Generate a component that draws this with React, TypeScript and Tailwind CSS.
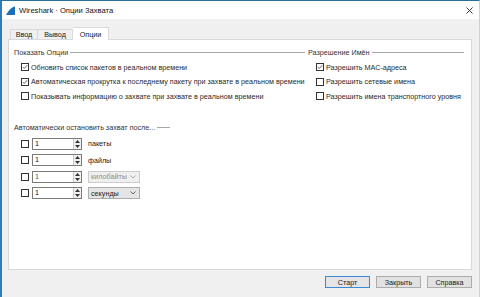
import React from "react";

function Check({ checked = false }: { checked?: boolean }) {
  return (
    <div className="w-[8px] h-[8px] border border-[#333333] bg-white flex items-center justify-center shrink-0">
      {checked && (
        <svg width="8" height="8" viewBox="0 0 8 8" className="block">
          <path d="M1 4 L3 6 L7 1.5" fill="none" stroke="#222" strokeWidth="0.9" />
        </svg>
      )}
    </div>
  );
}

function GroupHeader({ label, className = "" }: { label: string; className?: string }) {
  return (
    <div className={"flex items-center h-[9px] gap-[2px] " + className}>
      <span className="whitespace-nowrap text-[#333]">{label}</span>
      <div className="flex-1 h-px bg-[#a8a8a8]" />
    </div>
  );
}

function CheckRow({ label, checked = false }: { label: string; checked?: boolean }) {
  return (
    <div className="flex items-center h-[14.5px] gap-[2px]">
      <Check checked={checked} />
      <span className="whitespace-nowrap text-[#2a2a2a]">{label}</span>
    </div>
  );
}

function Spin({ disabled = false }: { disabled?: boolean }) {
  return (
    <div className="w-[50px] h-[12px] border border-[#7a7a7a] bg-white flex items-stretch">
      <span className={"flex-1 pl-[2px] leading-[10px] " + (disabled ? "text-[#555]" : "text-[#111]")}>1</span>
      <div className="w-[8px] flex flex-col border-l border-[#c8c8c8] bg-[#f0f0f0]">
        <div className="flex-1 flex items-center justify-center">
          <svg width="5" height="3" viewBox="0 0 5 3"><path d="M0 3 L2.5 0 L5 3Z" fill="#333" /></svg>
        </div>
        <div className="flex-1 flex items-center justify-center">
          <svg width="5" height="3" viewBox="0 0 5 3"><path d="M0 0 L2.5 3 L5 0Z" fill="#333" /></svg>
        </div>
      </div>
    </div>
  );
}

function Combo({ label, disabled = false }: { label: string; disabled?: boolean }) {
  return (
    <div
      className={
        "w-[52px] h-[12px] border flex items-center justify-between pl-[2px] pr-[3px] " +
        (disabled ? "border-[#cccccc] bg-[#efefef] text-[#8d8d8d]" : "border-[#adadad] bg-[#e5e5e5] text-[#222]")
      }
    >
      <span className="whitespace-nowrap">{label}</span>
      <svg width="6" height="4" viewBox="0 0 6 4">
        <path d="M0.5 0.5 L3 3 L5.5 0.5" fill="none" stroke={disabled ? "#999" : "#444"} strokeWidth="0.8" />
      </svg>
    </div>
  );
}

function SpinRow({ children, disabled = false }: { children: React.ReactNode; disabled?: boolean }) {
  return (
    <div className="flex items-center h-[12px] gap-[3px]">
      <Check />
      <Spin disabled={disabled} />
      <div className="ml-[3px]">{children}</div>
    </div>
  );
}

function Button({ label, primary = false }: { label: string; primary?: boolean }) {
  return (
    <div
      className={
        "w-[45px] h-[12px] flex items-center justify-center border text-[#222] " +
        (primary ? "border-[#3c8ad6] bg-[#e5e5e5]" : "border-[#adadad] bg-[#e1e1e1]")
      }
    >
      {label}
    </div>
  );
}

export default function App() {
  return (
    <div className="w-[480px] h-[297px] flex flex-col bg-[#f0f0f0] border-l-2 border-t border-r border-l-[#2f7cb9] border-t-[#2c6e98] border-r-[#c5d3de] overflow-hidden font-['Liberation_Sans',sans-serif] text-[7.2px] leading-[9px]">
      {/* Title bar */}
      <div className="h-[18px] bg-white flex items-center pl-[4px] pr-[6px] shrink-0">
        <svg width="9" height="9" viewBox="0 0 9 9" className="shrink-0">
          <path d="M0 9 L9 9 L9 0.5 C6 1 3 3.5 0 9Z" fill="#1b6fb8" />
        </svg>
        <span className="ml-[4px] text-[7.6px] text-[#111]">Wireshark · Опции Захвата</span>
        <div className="flex-1" />
        <svg width="7" height="7" viewBox="0 0 7 7">
          <path d="M0.5 0.5 L6.5 6.5 M6.5 0.5 L0.5 6.5" stroke="#222" strokeWidth="0.9" />
        </svg>
      </div>

      {/* Body */}
      <div className="flex-1 flex flex-col pl-[6px] pr-[7px]">
        {/* Tabs */}
        <div className="flex items-end h-[12px] mt-[8px] pl-[2px] relative z-10">
          <div className="w-[28px] h-[10px] border border-b-0 border-[#d9d9d9] bg-[#f0f0f0] flex items-center justify-center text-[#222]">
            Ввод
          </div>
          <div className="w-[35px] h-[10px] border border-b-0 border-l-0 border-[#d9d9d9] bg-[#f0f0f0] flex items-center justify-center text-[#222]">
            Вывод
          </div>
          <div className="w-[36px] h-[13px] -mb-px border border-b-0 border-l-0 border-[#d9d9d9] bg-white flex items-center justify-center text-[#222]">
            Опции
          </div>
        </div>

        {/* Panel */}
        <div className="h-[231px] border border-[#d9d9d9] bg-white pl-[5px] pr-[7px] pt-[8px] flex flex-col">
          <div className="flex gap-[3px]">
            <div className="w-[291px] flex flex-col">
              <GroupHeader label="Показать Опции" />
              <div className="pl-[7px] mt-[3px] flex flex-col">
                <CheckRow checked label="Обновить список пакетов в реальном времени" />
                <CheckRow checked label="Автоматическая прокрутка к последнему пакету при захвате в реальном времени" />
                <CheckRow label="Показывать информацию о захвате при захвате в реальном времени" />
              </div>
            </div>
            <div className="flex-1 flex flex-col">
              <GroupHeader label="Разрешение Имён" />
              <div className="pl-[8px] mt-[3px] flex flex-col">
                <CheckRow checked label="Разрешить МАС-адреса" />
                <CheckRow label="Разрешить сетевые имена" />
                <CheckRow label="Разрешить имена транспортного уровня" />
              </div>
            </div>
          </div>

          <GroupHeader label="Автоматически остановить захват после..." className="w-[156px] mt-[19px]" />
          <div className="pl-[7px] mt-[6px] flex flex-col gap-[4.5px]">
            <SpinRow>
              <span className="text-[#222]">пакеты</span>
            </SpinRow>
            <SpinRow>
              <span className="text-[#222]">файлы</span>
            </SpinRow>
            <SpinRow disabled>
              <Combo disabled label="килобайты" />
            </SpinRow>
            <SpinRow>
              <Combo label="секунды" />
            </SpinRow>
          </div>
        </div>

        {/* Buttons */}
        <div className="flex justify-end gap-[6px] mt-[6px]">
          <Button primary label="Старт" />
          <Button label="Закрыть" />
          <Button label="Справка" />
        </div>
      </div>
    </div>
  );
}
